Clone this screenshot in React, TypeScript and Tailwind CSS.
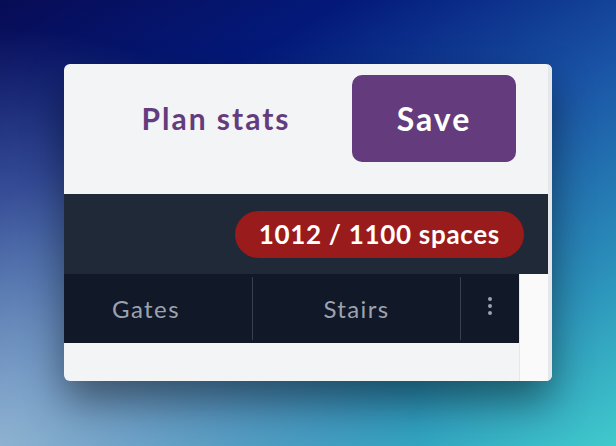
import { EllipsisVertical } from 'lucide-react';

const font = { fontFamily: 'Lato, "Noto Sans", sans-serif' };

function TabCell({ label, className }: { label: string; className?: string }) {
  return (
    <div className={['flex items-center justify-center text-[24px] tracking-[1.4px] text-[#9ca3af]', className].join(' ')}>
      {label}
    </div>
  );
}

export default function App() {
  return (
    <div
      style={font}
      className="h-[446px] w-full flex justify-center pt-[64px] bg-[radial-gradient(circle_at_0%_100%,rgba(190,215,225,0.7),transparent_55%),linear-gradient(150deg,#080c55_0%,#03197a_25%,#1a54a6_52%,#2a8cb8_76%,#40cacc_100%)]"
    >
      <div className="w-[488px] h-[317px] rounded-[6px] overflow-hidden bg-[#f3f4f6] flex shadow-[0_20px_40px_rgba(0,0,0,0.45)]">
        <div className="flex-1 flex flex-col">
          {/* header */}
          <div className="h-[130px] flex items-start pt-[11px] pr-[32px]">
            <div className="flex-1 h-[87px] flex items-center justify-center pl-[16px] text-[30px] font-bold tracking-[2px] text-[#643b7d]">
              Plan stats
            </div>
            <button className="w-[164px] h-[87px] rounded-[10px] bg-[#643b7d] text-white text-[32px] font-bold tracking-[2px]">
              Save
            </button>
          </div>

          {/* capacity */}
          <div className="h-[80px] bg-[#1f2937] flex items-center justify-end pr-[24px]">
            <span className="h-[47px] px-[24px] rounded-full bg-[#991b1b] text-white text-[26px] font-bold tracking-[0.7px] flex items-center">
              1012 / 1100 spaces
            </span>
          </div>

          <div className="flex-1 flex">
            <div className="flex-1 flex flex-col">
              <div className="h-[69px] bg-[#111827] flex">
                <TabCell label="Gates" className="w-[188px] pr-[24px]" />
                <div className="w-px my-[3px] bg-[#374151]" />
                <TabCell label="Stairs" className="w-[207px]" />
                <div className="w-px my-[3px] bg-[#374151]" />
                <div className="flex-1 flex items-center justify-center pb-[5px]">
                  <EllipsisVertical size={24} className="text-[#9ca3af]" />
                </div>
              </div>
            </div>
            <div className="w-[29px] bg-[#fafafa] border-l border-[#e5e7eb]" />
          </div>
        </div>
        <div className="w-[4px] bg-[#e5e7eb]" />
      </div>
    </div>
  );
}
